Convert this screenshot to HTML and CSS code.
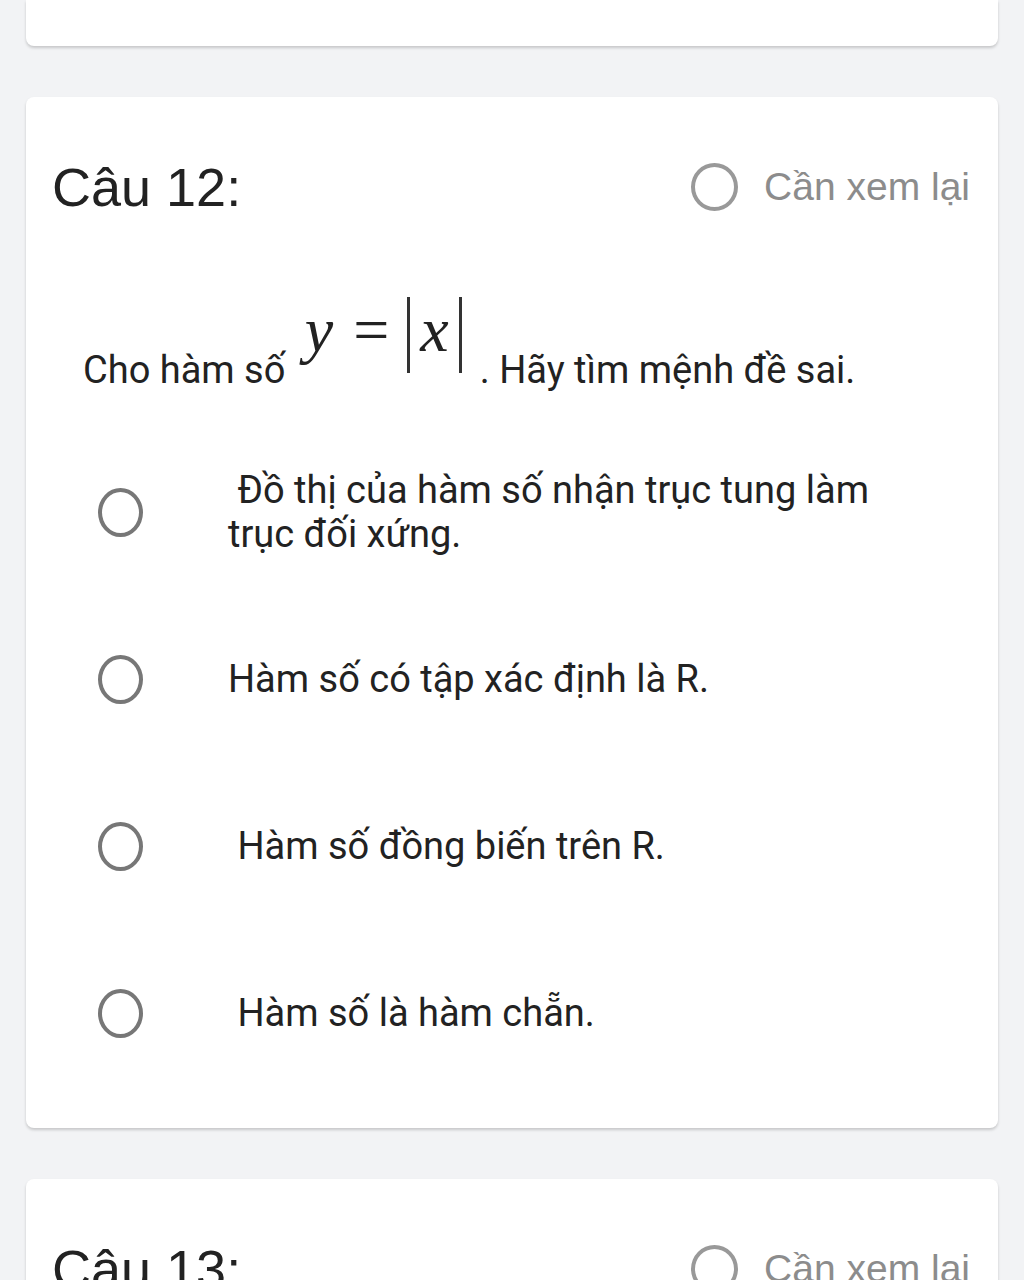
FILE: index.html
```html
<!DOCTYPE html>
<html lang="vi">
<head>
  <meta charset="UTF-8">
  <meta name="viewport" content="width=device-width, initial-scale=1.0">
  <title>Bài kiểm tra</title>
  <link rel="stylesheet" href="styles.css">
</head>
<body>
  <div class="card card-prev"></div>

  <div class="card">
    <div class="card-head">
      <h2 class="q-title">Câu 12:</h2>
      <label class="review"><span class="review-dot"></span>Cần xem lại</label>
    </div>
    <p class="q-text">Cho hàm số <span class="formula"><i>y</i><span class="eq">=</span><span class="abs"><i>x</i></span></span>. Hãy tìm mệnh đề sai.</p>
    <ul class="options">
      <li class="option">
        <span class="radio"></span>
        <span class="opt-text">&nbsp;Đồ thị của hàm số nhận trục tung làm trục đối xứng.</span>
      </li>
      <li class="option">
        <span class="radio"></span>
        <span class="opt-text">Hàm số có tập xác định là R.</span>
      </li>
      <li class="option">
        <span class="radio"></span>
        <span class="opt-text">&nbsp;Hàm số đồng biến trên R.</span>
      </li>
      <li class="option">
        <span class="radio"></span>
        <span class="opt-text">&nbsp;Hàm số là hàm chẵn.</span>
      </li>
    </ul>
  </div>

  <div class="card">
    <div class="card-head">
      <h2 class="q-title">Câu 13:</h2>
      <label class="review"><span class="review-dot"></span>Cần xem lại</label>
    </div>
  </div>
</body>
</html>
```

FILE: styles.css
```css
body {
  margin: 0;
  padding: 0 26px;
  background: #f2f3f5;
  font-family: Roboto, "Noto Sans", sans-serif;
  color: #222;
}
.card {
  background: white;
  border-radius: 8px;
  box-shadow: 0 2px 3px rgba(0,0,0,0.18);
  padding: 60px 28px 55px 26px;
  margin-bottom: 51px;
}
.card-prev {
  height: 46px;
  padding: 0;
  border-radius: 0 0 8px 8px;
}
.card-head {
  display: flex;
  justify-content: space-between;
  align-items: center;
}
.q-title {
  margin: 0;
  font: 400 54px/60px "Liberation Sans", Arial, sans-serif;
  color: #222;
}
.review {
  display: flex;
  align-items: center;
  gap: 26px;
  font: 39px/48px "Liberation Sans", Arial, sans-serif;
  color: #8c8c8c;
}
.review-dot {
  box-sizing: border-box;
  width: 47px;
  height: 48px;
  border: 4px solid #999;
  border-radius: 50%;
}
.q-text {
  margin: 80px 0 0 31px;
  font-size: 38px;
  line-height: 44px;
}
.formula {
  display: inline-flex;
  align-items: baseline;
  vertical-align: 32px;
  margin: 0 18px 0 10px;
  font: 64px/1 "Liberation Serif", "Times New Roman", serif;
  color: #222;
}
.formula i {
  font-style: italic;
}
.formula .eq {
  margin: 0 18px 0 20px;
}
.abs {
  line-height: 66px;
  padding: 0 10px 10px 10px;
  border-left: 3px solid #333;
  border-right: 3px solid #333;
}
.options {
  list-style: none;
  margin: 60px 0 0 46px;
  padding: 0;
  display: flex;
  flex-direction: column;
  gap: 47px;
}
.option {
  display: flex;
  align-items: center;
  min-height: 120px;
}
.radio {
  flex: none;
  box-sizing: border-box;
  width: 45px;
  height: 49px;
  border: 4px solid #777;
  border-radius: 50%;
  margin-right: 85px;
}
.opt-text {
  font-size: 38px;
  line-height: 44px;
  max-width: 680px;
}
```
